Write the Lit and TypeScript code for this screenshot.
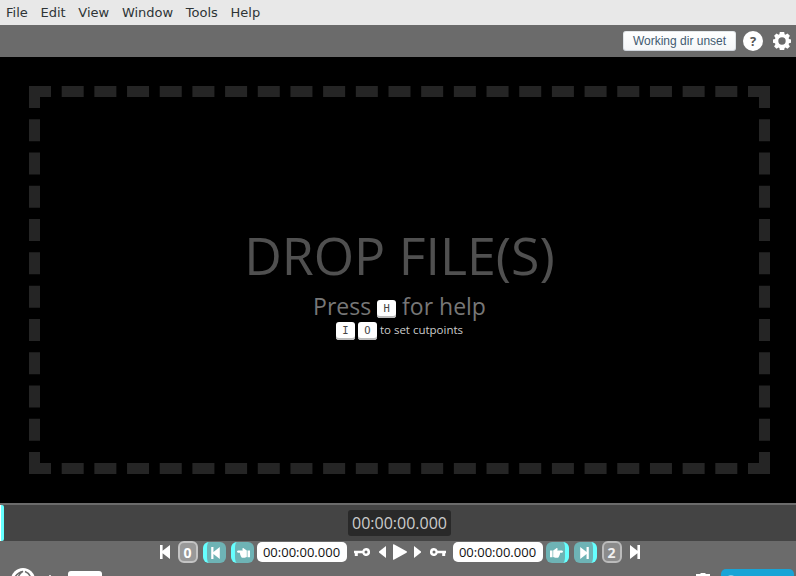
import { LitElement, html, css, svg } from "lit";
import { customElement } from "lit/decorators.js";

const skip = svg`<path d="M0 0h2.6v5.8L10 0v14L2.6 8.2V14H0z"/>`;
const skipIcon = (cls = "") => html`<svg class="${cls}" width="10" height="14" viewBox="0 0 10 14">${skip}</svg>`;
const keyIcon = (cls = "") => html`<svg class="${cls}" width="16" height="8" viewBox="0 0 16 8">
  <path fill-rule="evenodd" d="M4 0a4 4 0 0 1 3.7 2.7H16v2.6h-.8V8h-3V5.3H7.7A4 4 0 1 1 4 0zm0 2.5a1.5 1.5 0 1 0 0 3a1.5 1.5 0 0 0 0-3z"/></svg>`;
const handIcon = (cls = "") => html`<svg class="${cls}" width="13" height="10" viewBox="0 0 13 10">
  <path d="M0 2.6h2.5v6.6H0zM3.2 2.6L5.4 1 6.6.1q1.3 0 1 1.3l-.4 1H12q1 .2 1 1.2t-1 1.2H9.9q.5.6-.1 1.3q.3.8-.4 1.2q.2.9-.5 1.2q.1 1.1-1.1 1.2H5.3L3.2 9z"/></svg>`;

@customElement("app-root")
export class AppRoot extends LitElement {
  static styles = css`
    :host { display: flex; flex-direction: column; width: 796px; height: 576px; overflow: hidden;
      background: #6b6b6b; color: #fff; font-family: "Open Sans", "Noto Sans", sans-serif; }
    * { box-sizing: border-box; }
    svg { display: block; fill: currentColor; flex: none; }
    .flip { transform: scaleX(-1); }
    .menu { display: flex; flex: none; height: 25px; padding-left: 6px; gap: 12.7px; background: #e8e8e8; color: #2e3436;
      font: 13px/25px "DejaVu Sans", sans-serif; }
    .top { flex: none; height: 32px; display: flex; align-items: center; justify-content: flex-end; padding-right: 5px; }
    .dir { width: 113px; height: 20px; border-radius: 3px; background: linear-gradient(#fff, #f4f5f7);
      box-shadow: inset 0 0 0 1px rgba(67,90,111,.14), inset 0 -1px 1px rgba(67,90,111,.06);
      color: #425a70; font: 12px/20px "Liberation Sans", sans-serif; text-align: center; margin-right: 7px; }
    .help { margin-right: 10px; }
    .player { flex: none; height: 446px; background: #000; padding: 29px 26px 29px 29px; }
    .drop { height: 388px; border: 11px dashed #252525; display: flex; flex-direction: column; align-items: center;
      justify-content: center; color: #505050; white-space: nowrap; }
    .title { font: 51.84px/71px "Open Sans", sans-serif; }
    .press { font: 23px/31px "Open Sans", sans-serif; color: #777; }
    .cut { font: 11.5px/16px "Open Sans", sans-serif; color: #ccc; }
    .key { display: inline-block; width: 19px; height: 18px; border-radius: 3px; background: #fff; color: #444;
      box-shadow: inset 0 -2px 0 #bbb; font: 10.5px/16px "DejaVu Sans Mono", monospace; text-align: center; vertical-align: middle; }
    .timeline { flex: none; height: 38px; border-top: 2px solid #6b6b6b; background: #444; display: flex; position: relative;
      align-items: center; justify-content: center; padding-left: 3px; }
    .cursor { position: absolute; left: 0; top: 0; width: 4px; height: 36px; border-left: 1px solid #fff; background: #6ff; border-radius: 0 2px 2px 0; }
    .time { width: 103px; height: 26px; border-radius: 3px; background: #292929; color: #ccc; text-align: center; font: 16px/26px "Open Sans", sans-serif; }
    .controls { flex: none; height: 22px; display: grid; align-items: center; justify-items: start;
      grid-template-columns: 18px 25px 28px 26px 97px 25px 14px 21px 16px 23px 93px 28px 28px 28px 10px; padding-left: 160px; }
    .seg { width: 20px; height: 22px; border: 2px solid #c4c4c4; border-radius: 6px; background: #999; font: bold 14px/20px "Open Sans", sans-serif; text-align: center; padding-right: 1px; }
    .seg.off { background: #8b8b8b; border-color: #bbb; color: #f0f0f0; }
    .cutbtn { width: 23px; height: 21px; margin-top: 1px; border-radius: 6px; background: #6eb3b5; display: flex; align-items: center; justify-content: center; }
    .start { border-left: 4px solid #6ff; padding-right: 2px; }
    .end { border-right: 4px solid #6ff; padding-left: 1px; }
    .field { width: 90px; height: 20px; border-radius: 5px; background: #fff; color: #111; font: 13px/20px "Open Sans", sans-serif; text-align: center; padding-right: 1px; }
    .bottom { flex: none; height: 30px; display: flex; align-items: flex-start; padding: 5px 2px 0 11px; }
    .dot { margin: 6px 0 0 14px; }
    .select { width: 34px; height: 20px; margin: 3px 0 0 17px; background: #fff; border-radius: 3px; }
    .camera { margin: 5px 11px 0 auto; }
    .export { width: 73px; height: 26px; margin-top: 1px; border-radius: 5px; background: #18a4d6; overflow: hidden; padding: 6px 0 0 5px; color: #80cce8; }
  `;

  render() {
    return html`
      <nav class="menu">${["File", "Edit", "View", "Window", "Tools", "Help"].map((m) => html`<span>${m}</span>`)}</nav>
      <header class="top">
        <div class="dir">Working dir unset</div>
        <svg class="help" width="20" height="20" viewBox="0 0 20 20"><circle cx="10" cy="10" r="10"/>
          <text x="10" y="14.7" text-anchor="middle" font-family="Open Sans" font-weight="700" font-size="13" fill="#555">?</text></svg>
        <svg width="18" height="18" viewBox="0 0 18 18"><path fill-rule="evenodd" d="M6.8 0h4.4l.4 2.3.8.4 2.1-1.3 2.4 2.4-1.3 2.1.4 1L18 7.4v3.4l-2 .5-.4 1 1.3 2.1-2.4 2.4-2.1-1.3-.8.4-.4 2.1H6.8l-.4-2.1-.8-.4-2.1 1.3-2.4-2.4 1.3-2.1-.4-1-2-.5V7.4l2-.5.4-1L1.1 3.8l2.4-2.4 2.1 1.3.8-.4zM9 5.3a3.7 3.7 0 1 0 0 7.4a3.7 3.7 0 0 0 0-7.4z"/></svg>
      </header>
      <main class="player"><div class="drop">
        <div class="title">DROP FILE(S)</div>
        <div class="press">Press <span class="key">H</span> for help</div>
        <div class="cut"><span class="key">I</span> <span class="key">O</span> to set cutpoints</div>
      </div></main>
      <section class="timeline"><div class="cursor"></div><div class="time">00:00:00.000</div></section>
      <section class="controls">
        ${skipIcon()}
        <div class="seg">0</div>
        <div class="cutbtn start"><svg width="9" height="12" viewBox="0 0 10 14">${skip}</svg></div>
        <div class="cutbtn start">${handIcon("flip")}</div>
        <div class="field">00:00:00.000</div>
        ${keyIcon("flip")}
        <svg width="7" height="12" viewBox="0 0 7 12"><path d="M7 0v12L0 6.6V5.4z"/></svg>
        <svg width="14" height="16" viewBox="0 0 14 16"><path d="M0 .8Q0 0 .8.3L13.5 7.3q1 .7 0 1.4L.8 15.7Q0 16 0 15.2z"/></svg>
        <svg width="7" height="12" viewBox="0 0 7 12"><path d="M0 0v12l7-5.4V5.4z"/></svg>
        ${keyIcon()}
        <div class="field">00:00:00.000</div>
        <div class="cutbtn end">${handIcon()}</div>
        <div class="cutbtn end"><svg class="flip" width="9" height="12" viewBox="0 0 10 14">${skip}</svg></div>
        <div class="seg off">2</div>
        ${skipIcon("flip")}
      </section>
      <footer class="bottom">
        <svg width="24" height="24" viewBox="0 0 24 24"><circle cx="12" cy="12" r="12"/>
          <path d="M4 9Q7 4 12 3.4Q8 5.5 7 10M14 3.5Q18 5 19.5 9" fill="none" stroke="#6b6b6b" stroke-width="1.5"/></svg>
        <svg class="dot" width="2" height="5" viewBox="0 0 2 5"><circle cx="1" cy="2" r="1"/></svg>
        <div class="select"></div>
        <svg class="camera" width="14" height="12" viewBox="0 0 14 12"><path d="M0 1h4l1-1h4l1 1h4v11H0z"/></svg>
        <div class="export"><svg width="10" height="10" viewBox="0 0 10 10"><circle cx="5" cy="5" r="5"/></svg></div>
      </footer>`;
  }
}
